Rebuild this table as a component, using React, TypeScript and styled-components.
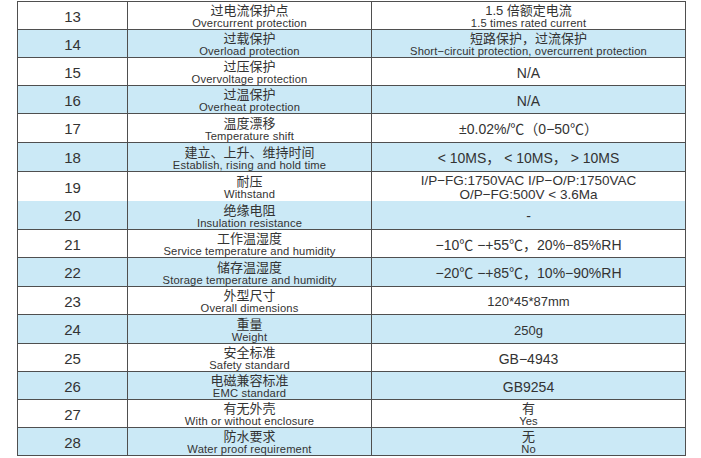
import React from "react";
import styled, { createGlobalStyle } from "styled-components";

const Global = createGlobalStyle`
  html, body { margin: 0; padding: 0; background: #ffffff; }
  body { font-family: "Liberation Sans", Arial, "Noto Sans CJK SC", sans-serif; color: #333; }
`;

const Page = styled.div`
  width: 701px;
  height: 458px;
  overflow: hidden;
  padding: 1px 0 0 17px;
  box-sizing: border-box;
`;

const Table = styled.div`
  display: flex;
  flex-direction: column;
  width: 669px;
  border-left: 1px solid #4f4f4f;
  border-top: 1px solid #4f4f4f;
  box-sizing: border-box;
`;

const Row = styled.div<{ $h: number; $alt: boolean }>`
  display: grid;
  grid-template-columns: 110px 244px 314px;
  height: ${(p) => p.$h}px;
  background: ${(p) => (p.$alt ? "#cbe9f6" : "#ffffff")};
`;

const Cell = styled.div`
  border-right: 1px solid #4f4f4f;
  border-bottom: 1px solid #4f4f4f;
  display: flex;
  flex-direction: column;
  align-items: center;
  justify-content: center;
  text-align: center;
  white-space: nowrap;
  padding-top: 2px;
  box-sizing: border-box;
`;

const Num = styled.span`
  font-size: 15px;
  line-height: 16px;
  color: #333;
`;

const Zh = styled.span`
  font-family: "Liberation Sans", Arial, "Noto Sans CJK SC", sans-serif;
  font-size: 13px;
  line-height: 14px;
  color: #333;
`;

const En = styled.span`
  font-size: 11.2px;
  line-height: 11px;
  letter-spacing: 0.15px;
  color: #333;
`;

const Value = styled.span<{ $size?: number }>`
  font-family: "Liberation Sans", Arial, "Noto Sans CJK SC", sans-serif;
  font-size: ${(p) => p.$size ?? 14}px;
  line-height: ${(p) => (p.$size ?? 14)}px;
  color: #333;
`;

type Item = {
  n: number;
  zh: string;
  en: string;
  v: React.ReactNode;
  h: number;
};

const rows: Item[] = [
  { n: 13, zh: "过电流保护点", en: "Overcurrent protection", h: 28,
    v: (<><Zh>1.5 倍额定电流</Zh><En>1.5 times rated current</En></>) },
  { n: 14, zh: "过载保护", en: "Overload protection", h: 28,
    v: (<><Zh>短路保护，过流保护</Zh><En>Short−circuit protection, overcurrent protection</En></>) },
  { n: 15, zh: "过压保护", en: "Overvoltage protection", h: 28, v: <Value>N/A</Value> },
  { n: 16, zh: "过温保护", en: "Overheat protection", h: 28, v: <Value>N/A</Value> },
  { n: 17, zh: "温度漂移", en: "Temperature shift", h: 29, v: <Value>±0.02%/℃（0−50℃）</Value> },
  { n: 18, zh: "建立、上升、维持时间", en: "Establish, rising and hold time", h: 29,
    v: <Value>&lt; 10MS， &lt; 10MS， &gt; 10MS</Value> },
  { n: 19, zh: "耐压", en: "Withstand", h: 29,
    v: (<><Value $size={13.5}>I/P−FG:1750VAC I/P−O/P:1750VAC</Value><Value $size={13.5}>O/P−FG:500V &lt; 3.6Ma</Value></>) },
  { n: 20, zh: "绝缘电阻", en: "Insulation resistance", h: 29, v: <Value>-</Value> },
  { n: 21, zh: "工作温湿度", en: "Service temperature and humidity", h: 28, v: <Value>−10℃ −+55℃，20%−85%RH</Value> },
  { n: 22, zh: "储存温湿度", en: "Storage temperature and humidity", h: 29, v: <Value>−20℃ −+85℃，10%−90%RH</Value> },
  { n: 23, zh: "外型尺寸", en: "Overall dimensions", h: 28, v: <Value $size={13}>120*45*87mm</Value> },
  { n: 24, zh: "重量", en: "Weight", h: 29, v: <Value $size={13}>250g</Value> },
  { n: 25, zh: "安全标准", en: "Safety standard", h: 28, v: <Value>GB−4943</Value> },
  { n: 26, zh: "电磁兼容标准", en: "EMC standard", h: 28, v: <Value>GB9254</Value> },
  { n: 27, zh: "有无外壳", en: "With or without enclosure", h: 28,
    v: (<><Zh>有</Zh><En>Yes</En></>) },
  { n: 28, zh: "防水要求", en: "Water proof requirement", h: 28,
    v: (<><Zh>无</Zh><En>No</En></>) },
];

export default function App() {
  return (
    <>
      <Global />
      <Page>
        <Table>
          {rows.map((r, i) => (
            <Row key={r.n} $h={r.h} $alt={i % 2 === 1}>
              <Cell><Num>{r.n}</Num></Cell>
              <Cell><Zh>{r.zh}</Zh><En>{r.en}</En></Cell>
              <Cell>{r.v}</Cell>
            </Row>
          ))}
        </Table>
      </Page>
    </>
  );
}
